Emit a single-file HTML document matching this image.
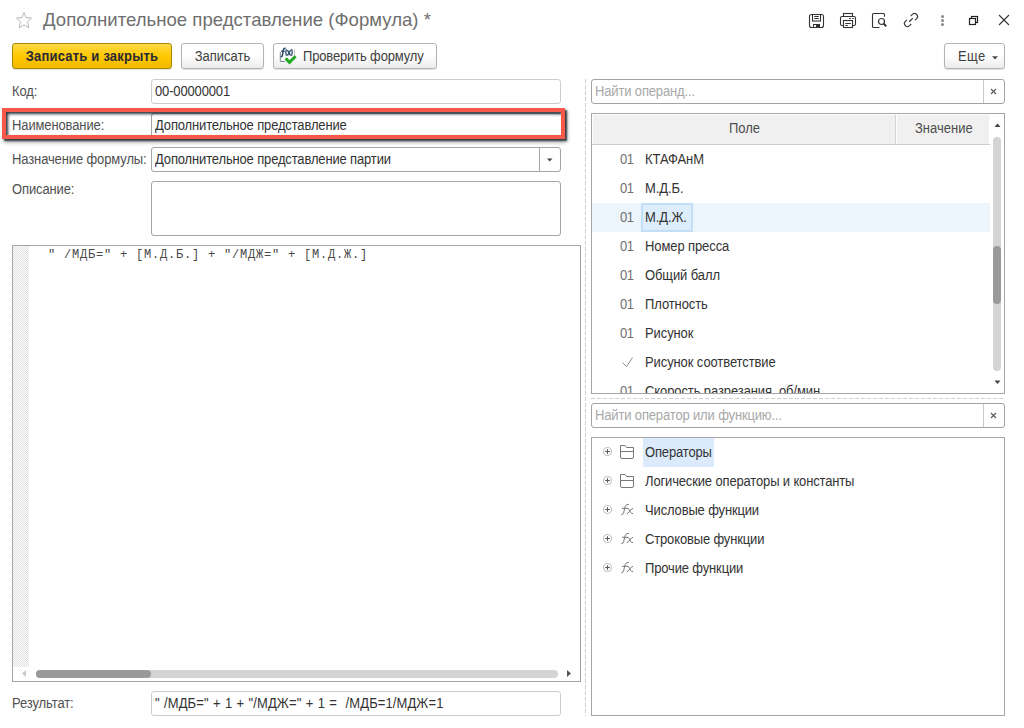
<!DOCTYPE html>
<html><head><meta charset="utf-8">
<style>
*{box-sizing:border-box;margin:0;padding:0}
html,body{width:1024px;height:728px;overflow:hidden;background:#fff}
body{position:relative;font-family:"Liberation Sans",sans-serif;font-size:13px;color:#333}
.a{position:absolute;white-space:nowrap}
.title{left:43px;top:8px;font-size:18.6px;color:#6f6f6f;line-height:24px}
.btn{position:absolute;top:43px;height:26px;border:1px solid #b3b3b3;border-radius:3px;background:linear-gradient(#fff 0%,#fff 45%,#ececec 100%);box-shadow:0 1px 1px rgba(0,0,0,.12);text-align:center;line-height:24px;color:#404040}
.btn.y{letter-spacing:0.2px;border-color:#a8890a;background:linear-gradient(#ffd94a 0%,#ffc800 50%,#f1b900 100%);font-weight:bold;color:#2a2a35}
.lbl{position:absolute;left:12px;color:#505050;line-height:16px;letter-spacing:-0.12px}
.inp{position:absolute;left:151px;width:410px;height:25px;border:1px solid #cdcdcd;border-radius:3px;background:#fff;padding-left:3px;line-height:24px;color:#333;letter-spacing:-0.15px}
.inp.d{border-color:#a5a5a5}

.ph{color:#a8a8a8;line-height:16px;letter-spacing:-0.15px}
.num{left:28px;color:#707070;line-height:16px;letter-spacing:-0.5px}
.txt{left:53px;color:#333;line-height:16px;letter-spacing:-0.1px}
.trow{position:absolute;left:0;width:400px;height:29px}
.trow .pl{left:10px;top:8px}
.trow .ic{left:27px;top:6px}
.trow .fx{left:27px;top:6px}
.trow .tt{left:53px;top:7px;color:#333;line-height:16px;letter-spacing:-0.15px}

.lbl,.num,.txt,.tt,.ph,.hd,.s{transform:scaleY(1.1);transform-origin:0 8px}
.s{display:inline-block;line-height:24px;vertical-align:top;transform-origin:0 12px}
.btn .s{position:relative;top:1px}
</style></head><body>
<!-- title star -->
<svg class="a" style="left:15px;top:11px" width="18" height="18" viewBox="0 0 18 18"><path d="M9 1.6 L11.2 6.6 L16.5 7.1 L12.5 10.7 L13.8 16.8 L9 13.8 L4.2 16.8 L5.5 10.7 L1.5 7.1 L6.8 6.6 Z" fill="none" stroke="#b5b8bc" stroke-width="1" stroke-linejoin="miter"/></svg>
<div class="a title">Дополнительное представление (Формула) *</div>

<div class="btn y" style="left:12px;width:160px"><span class="s">Записать и закрыть</span></div>
<div class="btn" style="left:181px;width:83px"><span class="s">Записать</span></div>
<div class="btn" style="left:273px;width:164px;text-align:left;padding-left:29px;letter-spacing:-0.15px"><span class="s">Проверить формулу</span></div>
<div class="btn" style="left:944px;width:61px;text-align:left;padding-left:13px;letter-spacing:0.4px"><span class="s">Еще</span></div>

<div class="lbl" style="top:84px">Код:</div>
<div class="inp" style="top:79px"><span class="s">00-00000001</span></div>
<div class="lbl" style="top:118px">Наименование:</div>
<div class="inp d" style="top:113px;border-right-color:transparent"><span class="s">Дополнительное представление</span></div>
<div class="lbl" style="top:152px">Назначение формулы:</div>
<div class="inp d" style="top:147px"><span class="s">Дополнительное представление партии</span></div>
<div class="lbl" style="top:182px">Описание:</div>
<div class="inp d" style="top:181px;height:55px"></div>


<!-- code editor -->
<div class="a" style="left:12px;top:245px;width:569px;height:437px;border:1px solid #a5a5a5;border-right-color:#a0a0a0;background:#fff"></div>
<div class="a" style="left:13px;top:246px;width:16px;height:421px;background-color:#fff;background-image:repeating-conic-gradient(#e0e0e0 0 25%,#fff 0 50%);background-size:2px 2px"></div>
<div class="a" style="left:48px;top:247px;font-family:'Liberation Mono',monospace;font-size:12px;letter-spacing:0.8px;line-height:16px;color:#4a4a4a">" /МДБ=" + [М.Д.Б.] + "/МДЖ=" + [М.Д.Ж.]</div>
<!-- h scrollbar -->
<svg class="a" style="left:20px;top:669px" width="8" height="9"><path d="M6 1 L2 4.5 L6 8 Z" fill="#c8c8c8"/></svg>
<div class="a" style="left:36px;top:670px;width:522px;height:8px;border-radius:4px;background:#d4d4d4"></div>
<div class="a" style="left:36px;top:670px;width:115px;height:8px;border-radius:4px;background:#9a9a9a"></div>
<svg class="a" style="left:565px;top:669px" width="8" height="9"><path d="M2 1 L6 4.5 L2 8 Z" fill="#555"/></svg>

<div class="lbl" style="top:696px">Результат:</div>
<div class="inp" style="top:691px;letter-spacing:0.1px;word-spacing:0.6px"><span class="s">" /МДБ=" + 1 + "/МДЖ=" + 1 =&nbsp; /МДБ=1/МДЖ=1</span></div>

<!-- vertical dashed separator -->
<div class="a" style="left:585px;top:79px;width:1px;height:637px;background:repeating-linear-gradient(#d0d0d0 0 4px,transparent 4px 6px)"></div>

<!-- right panel: operand search -->
<div class="a srch" style="left:591px;top:79px;width:414px;height:25px;border:1px solid #a3a3a3;border-radius:3px;background:#fff"></div>
<div class="a" style="left:983px;top:80px;width:1px;height:23px;background:#c8c8c8"></div>
<div class="a ph" style="left:595px;top:84px">Найти операнд...</div>
<svg class="a" style="left:989px;top:87px" width="9" height="9"><path d="M2 2 L7 7 M7 2 L2 7" stroke="#5a5a5a" stroke-width="1.1"/></svg>

<!-- table -->
<div class="a" style="left:591px;top:113px;width:414px;height:281px;border:1px solid #a5a5a5;background:#fff;overflow:hidden">
  <div class="a" style="left:0;top:0;width:398px;height:31px;background:#f0f0f0;border:1px solid #fff;border-bottom:none"></div>
  <div class="a" style="left:0;top:30px;width:398px;height:1px;background:#cdcdcd"></div>
  <div class="a" style="left:303px;top:1px;width:1px;height:29px;background:#d4d4d4"></div>
  <div class="a" style="left:304px;top:1px;width:1px;height:29px;background:#fff"></div>
  <div class="a hd" style="left:137px;top:7px;color:#4d4d4d">Поле</div>
  <div class="a hd" style="left:323px;top:7px;color:#4d4d4d">Значение</div>
  <!-- selected row -->
  <div class="a" style="left:0;top:89px;width:398px;height:29px;background:#edf5fc"></div>
  <div class="a" style="left:49px;top:89px;width:52px;height:29px;background:#deedfb;border:2px solid #c3dff8"></div>
  <div class="rows">
    <div class="a num" style="top:38px">01</div><div class="a txt" style="top:38px">КТАФАнМ</div>
    <div class="a num" style="top:67px">01</div><div class="a txt" style="top:67px">М.Д.Б.</div>
    <div class="a num" style="top:96px">01</div><div class="a txt" style="top:96px">М.Д.Ж.</div>
    <div class="a num" style="top:125px">01</div><div class="a txt" style="top:125px">Номер пресса</div>
    <div class="a num" style="top:154px">01</div><div class="a txt" style="top:154px">Общий балл</div>
    <div class="a num" style="top:183px">01</div><div class="a txt" style="top:183px">Плотность</div>
    <div class="a num" style="top:212px">01</div><div class="a txt" style="top:212px">Рисунок</div>
    <svg class="a" style="left:30px;top:243px" width="12" height="12"><path d="M0.6 5.6 L4.5 9.5 L10.5 0.6" fill="none" stroke="#8a8a8a" stroke-width="1"/></svg>
    <div class="a txt" style="top:241px">Рисунок соответствие</div>
    <div class="a num" style="top:270px">01</div><div class="a txt" style="top:270px">Скорость разрезания, об/мин</div>
  </div>
  <!-- v scrollbar -->
  <svg class="a" style="left:402px;top:9px" width="7" height="5"><path d="M0.5 4 L3.5 0.5 L6.5 4 Z" fill="#444"/></svg>
  <div class="a" style="left:401px;top:23px;width:8px;height:234px;border-radius:4px;background:#d4d4d4"></div>
  <div class="a" style="left:401px;top:132px;width:8px;height:58px;border-radius:4px;background:#9a9a9a"></div>
  <svg class="a" style="left:402px;top:266px" width="7" height="5"><path d="M0.5 0.5 L3.5 4 L6.5 0.5 Z" fill="#444"/></svg>
</div>

<!-- horizontal dashed separator -->
<div class="a" style="left:591px;top:398px;width:412px;height:1px;background:repeating-linear-gradient(90deg,#d0d0d0 0 4px,transparent 4px 6px)"></div>

<!-- operator search -->
<div class="a" style="left:591px;top:403px;width:414px;height:25px;border:1px solid #a3a3a3;border-radius:3px;background:#fff"></div>
<div class="a" style="left:983px;top:404px;width:1px;height:23px;background:#c8c8c8"></div>
<div class="a ph" style="left:595px;top:408px">Найти оператор или функцию...</div>
<svg class="a" style="left:989px;top:411px" width="9" height="9"><path d="M2 2 L7 7 M7 2 L2 7" stroke="#5a5a5a" stroke-width="1.1"/></svg>

<!-- tree -->
<div class="a" style="left:591px;top:437px;width:414px;height:279px;border:1px solid #a5a5a5;background:#fff;overflow:hidden">
  <div class="a" style="left:51px;top:0px;width:71px;height:29px;background:#dcebfb"></div>
  <div class="trow" style="top:0px"><svg class="a pl" width="12" height="12" viewBox="0 0 12 12"><circle cx="5.5" cy="5.5" r="4" fill="none" stroke="#c2c2c2" stroke-width="1.1"/><path d="M3.1 5.5 H7.9 M5.5 3.1 V7.9" stroke="#5a5a5a" stroke-width="1"/></svg><svg class="a ic" width="16" height="16" viewBox="0 0 16 16"><path d="M1.5 13 V1.5 H6 L7.5 3.5 H14.5 V13 Q14.5 14.5 13 14.5 H3 Q1.5 14.5 1.5 13 Z M1.5 7.5 H14.5" fill="none" stroke="#787878" stroke-width="1"/></svg><div class="a tt">Операторы</div></div>
  <div class="trow" style="top:29px"><svg class="a pl" width="12" height="12" viewBox="0 0 12 12"><circle cx="5.5" cy="5.5" r="4" fill="none" stroke="#c2c2c2" stroke-width="1.1"/><path d="M3.1 5.5 H7.9 M5.5 3.1 V7.9" stroke="#5a5a5a" stroke-width="1"/></svg><svg class="a ic" width="16" height="16" viewBox="0 0 16 16"><path d="M1.5 13 V1.5 H6 L7.5 3.5 H14.5 V13 Q14.5 14.5 13 14.5 H3 Q1.5 14.5 1.5 13 Z M1.5 7.5 H14.5" fill="none" stroke="#787878" stroke-width="1"/></svg><div class="a tt">Логические операторы и константы</div></div>
  <div class="trow" style="top:58px"><svg class="a pl" width="12" height="12" viewBox="0 0 12 12"><circle cx="5.5" cy="5.5" r="4" fill="none" stroke="#c2c2c2" stroke-width="1.1"/><path d="M3.1 5.5 H7.9 M5.5 3.1 V7.9" stroke="#5a5a5a" stroke-width="1"/></svg><svg class="a fx" width="16" height="16" viewBox="0 0 16 16"><path d="M2.4 12.6 Q4.1 12.9 4.6 10.8 L6.1 4.7 Q6.7 2.3 9.9 2.3 M3 6.3 H8.7" fill="none" stroke="#777" stroke-width="1"/><path d="M7.9 6.4 Q9.6 6 10.5 8.2 L11.4 10.2 Q12.2 11.9 14.1 11.6 M14 6.4 Q12.6 6.5 11 8.8 Q9.4 11.4 7.9 11.6" fill="none" stroke="#777" stroke-width="1"/></svg><div class="a tt">Числовые функции</div></div>
  <div class="trow" style="top:87px"><svg class="a pl" width="12" height="12" viewBox="0 0 12 12"><circle cx="5.5" cy="5.5" r="4" fill="none" stroke="#c2c2c2" stroke-width="1.1"/><path d="M3.1 5.5 H7.9 M5.5 3.1 V7.9" stroke="#5a5a5a" stroke-width="1"/></svg><svg class="a fx" width="16" height="16" viewBox="0 0 16 16"><path d="M2.4 12.6 Q4.1 12.9 4.6 10.8 L6.1 4.7 Q6.7 2.3 9.9 2.3 M3 6.3 H8.7" fill="none" stroke="#777" stroke-width="1"/><path d="M7.9 6.4 Q9.6 6 10.5 8.2 L11.4 10.2 Q12.2 11.9 14.1 11.6 M14 6.4 Q12.6 6.5 11 8.8 Q9.4 11.4 7.9 11.6" fill="none" stroke="#777" stroke-width="1"/></svg><div class="a tt">Строковые функции</div></div>
  <div class="trow" style="top:116px"><svg class="a pl" width="12" height="12" viewBox="0 0 12 12"><circle cx="5.5" cy="5.5" r="4" fill="none" stroke="#c2c2c2" stroke-width="1.1"/><path d="M3.1 5.5 H7.9 M5.5 3.1 V7.9" stroke="#5a5a5a" stroke-width="1"/></svg><svg class="a fx" width="16" height="16" viewBox="0 0 16 16"><path d="M2.4 12.6 Q4.1 12.9 4.6 10.8 L6.1 4.7 Q6.7 2.3 9.9 2.3 M3 6.3 H8.7" fill="none" stroke="#777" stroke-width="1"/><path d="M7.9 6.4 Q9.6 6 10.5 8.2 L11.4 10.2 Q12.2 11.9 14.1 11.6 M14 6.4 Q12.6 6.5 11 8.8 Q9.4 11.4 7.9 11.6" fill="none" stroke="#777" stroke-width="1"/></svg><div class="a tt">Прочие функции</div></div>
</div>

<!-- top right icons -->
<svg class="a" style="left:808px;top:13px" width="17" height="16" viewBox="0 0 17 16">
 <path d="M3 1.5 H13.5 Q15.5 1.5 15.5 3.5 V12.5 Q15.5 14.5 13.5 14.5 H3.5 Q1.5 14.5 1.5 12.5 V3.5 Q1.5 1.5 3.5 1.5 Z" fill="none" stroke="#333" stroke-width="1.1"/>
 <rect x="4.5" y="1.5" width="8" height="6.5" fill="none" stroke="#333" stroke-width="1.1"/>
 <path d="M6.2 3.5 H10.8 M6.2 5.5 H10.8" stroke="#333" stroke-width="1"/>
 <rect x="5" y="11" width="7" height="4" fill="#333"/>
 <rect x="6" y="12" width="2" height="2" fill="#fff"/>
</svg>
<svg class="a" style="left:839px;top:12px" width="18" height="17" viewBox="0 0 18 17">
 <rect x="4.5" y="1.5" width="9" height="3" fill="none" stroke="#333" stroke-width="1.1"/>
 <path d="M4 13.5 H3 Q1.5 13.5 1.5 12 V6 Q1.5 4.5 3 4.5 H15 Q16.5 4.5 16.5 6 V12 Q16.5 13.5 15 13.5 H14" fill="none" stroke="#333" stroke-width="1.1"/>
 <rect x="4.5" y="8.5" width="9" height="7" fill="#fff" stroke="#333" stroke-width="1.1"/>
 <path d="M6.3 11.5 H11.8 M6.3 13.5 H8.8 M10 6.5 H11.8 M13.3 6.5 H14.9" stroke="#333" stroke-width="1"/>
</svg>
<svg class="a" style="left:871px;top:12px" width="18" height="17" viewBox="0 0 18 17">
 <path d="M8.5 15.5 H2.5 Q1.5 15.5 1.5 14.5 V2.5 Q1.5 1.5 2.5 1.5 H12.5 Q13.5 1.5 13.5 2.5 V4.8" fill="none" stroke="#333" stroke-width="1.1"/>
 <circle cx="10.5" cy="9.5" r="3" fill="none" stroke="#333" stroke-width="1.2"/>
 <path d="M12.6 11.6 L15.2 14.2" stroke="#333" stroke-width="2"/>
</svg>
<svg class="a" style="left:902px;top:11px" width="18" height="18" viewBox="0 0 18 18">
 <g transform="rotate(-45 9 9)" fill="none" stroke="#3c3c3c" stroke-width="1.15">
  <path d="M6.3 6 H4 A3 3 0 0 0 4 12 H6.3 M11.7 6 H14 A3 3 0 0 1 14 12 H11.7 M6.5 9 H11.5"/>
 </g>
</svg>
<svg class="a" style="left:940px;top:14px" width="5" height="13"><circle cx="2.5" cy="2.5" r="1.5" fill="#888"/><circle cx="2.5" cy="6.5" r="1.5" fill="#888"/><circle cx="2.5" cy="10.5" r="1.5" fill="#888"/></svg>
<svg class="a" style="left:968px;top:15px" width="12" height="12" viewBox="0 0 12 12">
 <rect x="3.5" y="1.5" width="6" height="6" fill="#fff" stroke="#222" stroke-width="1.2"/>
 <rect x="1.5" y="3.5" width="6" height="6" fill="#fff" stroke="#222" stroke-width="1.2"/>
</svg>
<svg class="a" style="left:998px;top:14px" width="12" height="12"><path d="M1 1 L11 11 M11 1 L1 11" stroke="#333" stroke-width="1.1"/></svg>

<!-- Еще arrow -->
<svg class="a" style="left:992px;top:56px" width="6" height="4"><path d="M0 0.3 H6 L3 3.5 Z" fill="#4a4a4a"/></svg>
<!-- formula check icon -->
<svg class="a" style="left:278px;top:46px" width="20" height="20" viewBox="0 0 20 20">
 <path d="M2.3 6 V15.5 H7" fill="none" stroke="#7d8a98" stroke-width="1"/>
 <path d="M16.5 3.5 V10" fill="none" stroke="#b8c0c8" stroke-width="1"/>
 <path d="M2.6 10.6 Q4 11.2 4.5 9 L5.3 4 Q5.7 2 7.6 2.3 M3.2 5.2 H6.6" fill="none" stroke="#2b4a6b" stroke-width="1.5"/>
 <path d="M8.4 3 Q6.9 6.4 8.4 9.8 M13.6 3 Q15.1 6.4 13.6 9.8" fill="none" stroke="#2b4a6b" stroke-width="1.3"/>
 <path d="M9.4 4.2 L12.6 9.6 M12.6 4.2 L9.4 9.6" fill="none" stroke="#2b4a6b" stroke-width="1.3"/>
 <path d="M7.6 12.4 L11.5 16.3 L17.6 10.3" fill="none" stroke="#23a823" stroke-width="3"/>
</svg>
<!-- dropdown of назначение -->
<div class="a" style="left:539px;top:148px;width:1px;height:23px;background:#a5a5a5"></div>
<svg class="a" style="left:547px;top:158px" width="6" height="4"><path d="M0 0.5 H5.5 L2.75 3.5 Z" fill="#444"/></svg>

<!-- red annotation -->
<div class="a" style="left:2px;top:108px;width:563px;height:31px;border:4px solid #f6584a;box-shadow:2px 2px 1.5px rgba(20,30,35,.75), 2px 3px 4px rgba(20,30,35,.45), inset 2px 2px 3px rgba(20,30,35,.9)"></div>
</body></html>
